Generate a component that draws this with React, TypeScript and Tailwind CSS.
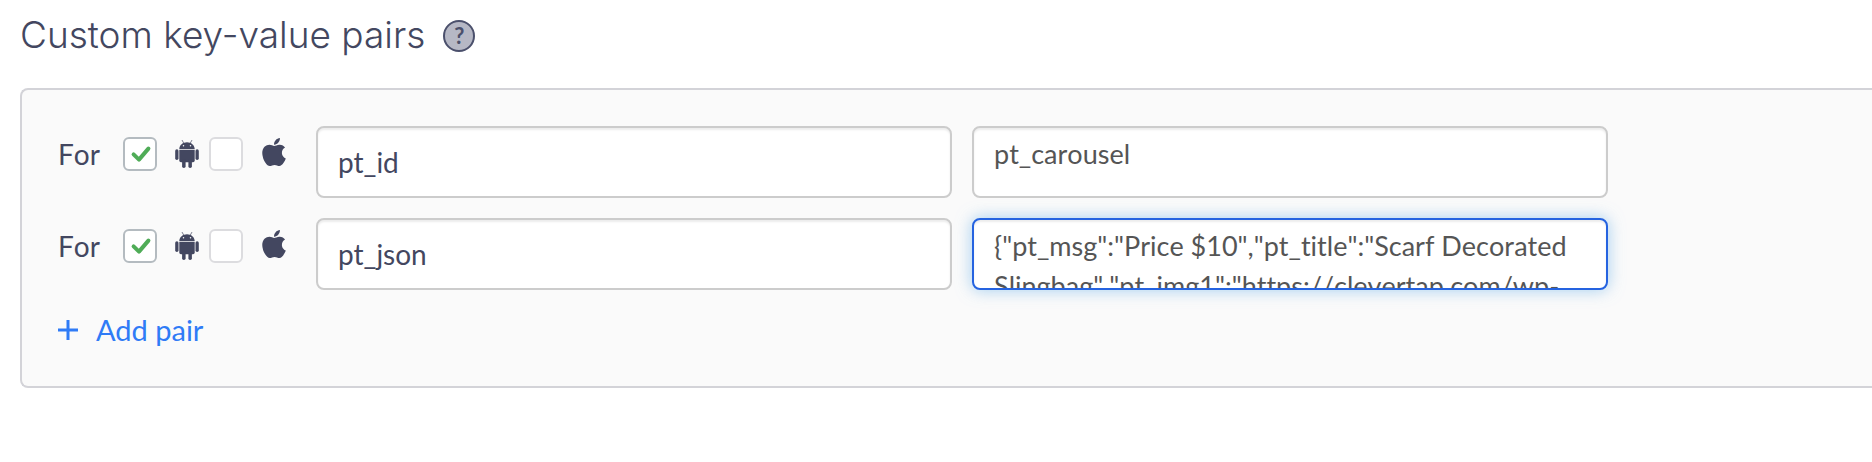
import { useState } from "react";
import { FaApple } from "react-icons/fa";

type Pair = { android: boolean; ios: boolean; name: string; value: string };

const initialPairs: Pair[] = [
  { android: true, ios: false, name: "pt_id", value: "pt_carousel" },
  {
    android: true,
    ios: false,
    name: "pt_json",
    value:
      '{"pt_msg":"Price $10","pt_title":"Scarf Decorated Slingbag","pt_img1":"https://clevertap.com/wp-content"}',
  },
];

function AndroidIcon() {
  return (
    <svg viewBox="0 0 24 28" className="h-7 w-6" fill="currentColor" aria-hidden="true">
      <path d="M7.2 0.4 8.7 3.1M16.8 0.4 15.3 3.1" stroke="currentColor" strokeWidth="0.7" strokeLinecap="round" fill="none" />
      <path
        fillRule="evenodd"
        d="M4.3 8.9C4.5 5 7.8 2.2 12 2.2s7.5 2.8 7.7 6.7zM8.5 4.9a.75.75 0 1 0 0 1.5.75.75 0 0 0 0-1.5zm7 0a.75.75 0 1 0 0 1.5.75.75 0 0 0 0-1.5z"
      />
      <path d="M4.3 9.8h15.4v10.7a1.7 1.7 0 0 1-1.7 1.7H6a1.7 1.7 0 0 1-1.7-1.7z" />
      <rect x="0.2" y="9.3" width="3.3" height="10.7" rx="1.65" />
      <rect x="20.5" y="9.3" width="3.3" height="10.7" rx="1.65" />
      <rect x="7.1" y="19" width="3.5" height="8.9" rx="1.7" />
      <rect x="13.4" y="19" width="3.5" height="8.9" rx="1.7" />
    </svg>
  );
}

function Tick({ label, checked, onChange }: { label: string; checked: boolean; onChange: (v: boolean) => void }) {
  return (
    <span className="grid size-[34px] shrink-0">
      <input
        type="checkbox"
        aria-label={label}
        checked={checked}
        onChange={(e) => onChange(e.target.checked)}
        className="col-start-1 row-start-1 size-full appearance-none rounded-md border-2 border-[#dcdcdf] bg-white checked:border-[#b4bbc0]"
      />
      {checked && (
        <svg
          viewBox="0 0 34 34"
          className="pointer-events-none col-start-1 row-start-1 size-full"
          fill="none"
          stroke="#4fac57"
          strokeWidth="4"
          aria-hidden="true"
        >
          <path d="M10.6 17.4 16 22.6 25.4 11.6" strokeLinecap="round" strokeLinejoin="round" />
        </svg>
      )}
    </span>
  );
}

const fieldBase = "h-[72px] w-full rounded-lg border-2 bg-white px-5 outline-none";
const fieldIdle = "border-[#cccccc] shadow-[inset_0_2px_2px_rgba(0,0,0,0.075)]";
const fieldActive =
  "border-[#2563e0] shadow-[inset_0_2px_2px_rgba(0,0,0,0.075),0_0_16px_rgba(102,175,233,0.6)]";

export default function App() {
  const [pairs, setPairs] = useState<Pair[]>(initialPairs);
  const [active, setActive] = useState(1);

  const update = (i: number, patch: Partial<Pair>) =>
    setPairs((list) => list.map((p, n) => (n === i ? { ...p, ...patch } : p)));

  return (
    <main className="bg-white pl-5 font-['Lato',sans-serif] text-[#434760] [font-variant-ligatures:none]">
      <header className="flex h-[88px] items-start gap-[18px] pt-3">
        <h1 className="font-['Inter',sans-serif] text-[37px] leading-[46px] font-light">Custom key-value pairs</h1>
        <button
          type="button"
          aria-label="Help"
          className="mt-2 flex size-8 items-center justify-center rounded-full border-2 border-[#4b506c] bg-[#b6b8c5] text-[22px] leading-none font-bold text-[#4b506c]"
        >
          ?
        </button>
      </header>

      <section className="rounded-l-lg border-2 border-r-0 border-[#d3d3d8] bg-[#fafafa] pt-9 pr-9 pb-9 pl-9">
        <div className="flex flex-col gap-5">
          {pairs.map((pair, i) => (
            <div key={i} className="flex items-start gap-5">
              <div className="flex h-14 w-[238px] shrink-0 items-center">
                <span className="w-[65px] text-[28px] leading-10 [font-kerning:none]">For</span>
                <Tick label="Android" checked={pair.android} onChange={(v) => update(i, { android: v })} />
                <span className="mr-2.5 ml-[18px]">
                  <AndroidIcon />
                </span>
                <Tick label="iOS" checked={pair.ios} onChange={(v) => update(i, { ios: v })} />
                <FaApple className="mb-1 ml-[15px] size-8 shrink-0" aria-hidden="true" />
              </div>
              <div className="max-w-[636px] flex-1">
                <input
                  type="text"
                  aria-label="Key"
                  value={pair.name}
                  onChange={(e) => update(i, { name: e.target.value })}
                  className={`text-[28px] ${fieldBase} ${fieldIdle}`}
                />
              </div>
              <div className="max-w-[636px] flex-1">
                <textarea
                  aria-label="Value"
                  value={pair.value}
                  onFocus={() => setActive(i)}
                  onChange={(e) => update(i, { value: e.target.value })}
                  className={`block resize-none overflow-hidden py-1.5 text-[27px] leading-10 text-[#555555] [font-kerning:none] ${fieldBase} ${
                    active === i ? fieldActive : fieldIdle
                  }`}
                />
              </div>
            </div>
          ))}
        </div>
        <button
          type="button"
          onClick={() => setPairs((list) => [...list, { android: true, ios: false, name: "", value: "" }])}
          className="mt-5 flex items-center gap-[18px] text-[29px] leading-10 text-[#2f7bf6]"
        >
          <svg viewBox="0 0 20 20" className="size-5" stroke="currentColor" strokeWidth="3" aria-hidden="true">
            <path d="M10 0v20M0 10h20" />
          </svg>
          Add pair
        </button>
      </section>
    </main>
  );
}
